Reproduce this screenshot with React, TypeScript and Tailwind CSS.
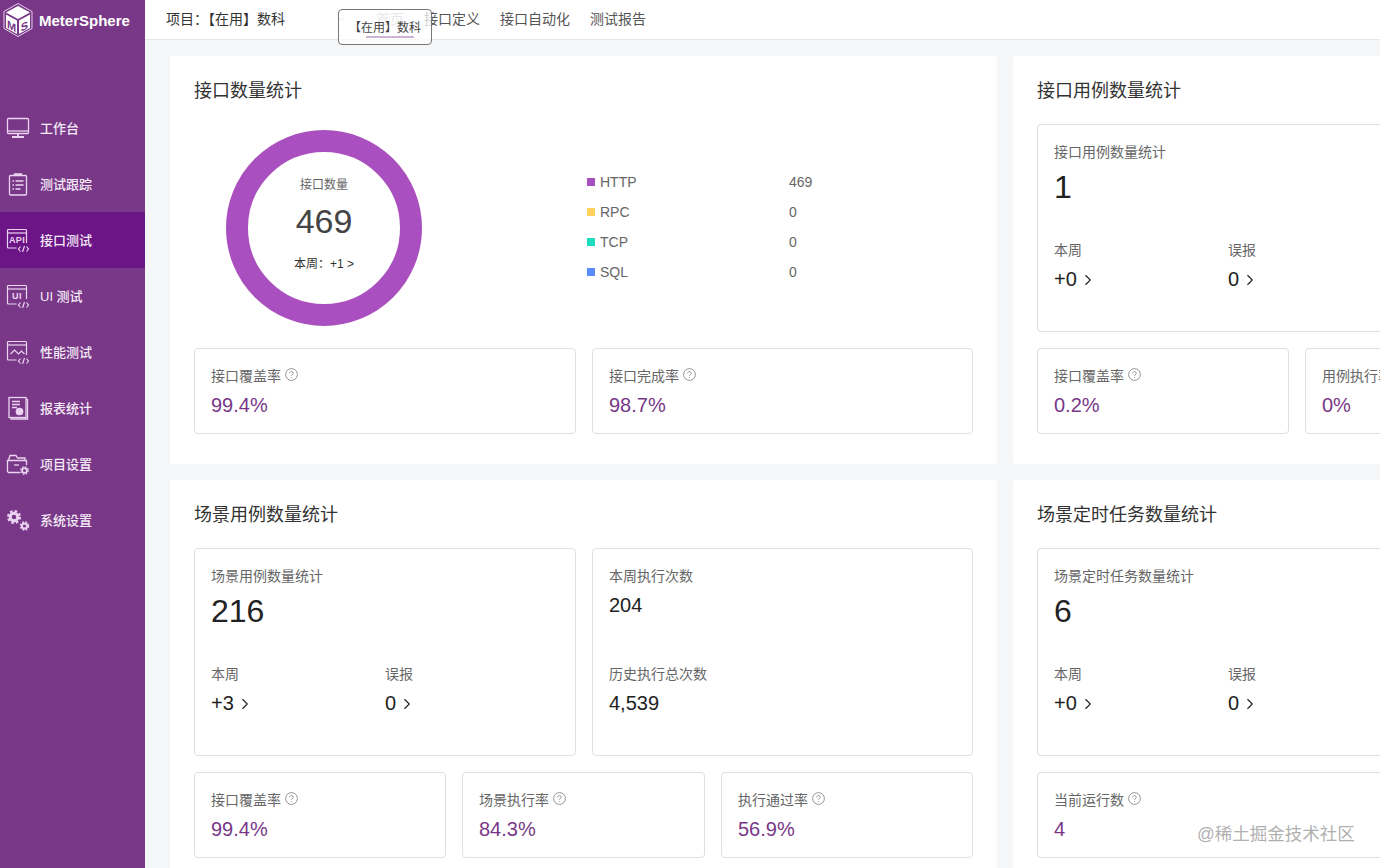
import React from 'react';
import { ChevronRight, ChevronDown } from 'lucide-react';

const IconStroke = '#ecd3f2';

const Monitor = () => (
  <svg width="24" height="22" viewBox="0 0 24 22" fill="none" stroke={IconStroke} strokeWidth="1.3">
    <rect x="1.5" y="1.5" width="21" height="15" rx="1" />
    <path d="M1.5 14h21" />
    <path d="M12 16.5v3M6 20h12" strokeWidth="1.8" />
  </svg>
);

const Clipboard = () => (
  <svg width="24" height="24" viewBox="0 0 24 24" fill="none" stroke={IconStroke} strokeWidth="1.3">
    <rect x="3.5" y="3.5" width="17" height="19.5" rx="1" />
    <path d="M8.5 4V2h7v2" fill={IconStroke} />
    <path d="M6.5 9h1.5M9.5 9h8M6.5 13h1.5M9.5 13h8M6.5 17h1.5M9.5 17h5" />
  </svg>
);

const CodeScreen = ({ label }: { label?: string }) => (
  <svg width="24" height="24" viewBox="0 0 24 24" fill="none" stroke={IconStroke} strokeWidth="1.2">
    <path d="M10.5 20H2.5a1 1 0 0 1-1-1V2.5a1 1 0 0 1 1-1h17a1 1 0 0 1 1 1V15" />
    <path d="M1.5 5h19" />
    {label ? (
      <text x="11" y="15" textAnchor="middle" fontSize="9" letterSpacing="0.4" fill={IconStroke} stroke="none" fontWeight="700" fontFamily="'Liberation Sans', sans-serif">
        {label}
      </text>
    ) : (
      <path d="M4.5 14l4-4 4 4 3-3 3 3" />
    )}
    <path d="M14.5 18.5L12.5 21l2 2.5M20.5 18.5l2 2.5-2 2.5M18.5 18l-2 6" />
  </svg>
);

const ReportIcon = () => (
  <svg width="22" height="24" viewBox="0 0 22 24" fill="none" stroke={IconStroke} strokeWidth="1.3">
    <rect x="2" y="1.5" width="17" height="20" />
    <path d="M19 3.5h1.5v19.5H4v-1.5" />
    <path d="M5 5.5h8M5 8.5h8M5 11.5h5" />
    <circle cx="12.5" cy="15.5" r="3.2" fill={IconStroke} />
  </svg>
);

const FolderGear = () => (
  <svg width="24" height="24" viewBox="0 0 24 24" fill="none" stroke={IconStroke} strokeWidth="1.3">
    <path d="M14 20.5H3a1.5 1.5 0 0 1-1.5-1.5V8.5h19V13" />
    <path d="M2.5 8.5l1.5-5h6l1.5 2.5h7.5v2.5" />
    <path d="M8 13h5" />
    <circle cx="18.5" cy="18.5" r="2.4" strokeWidth="1.8" />
    <circle cx="18.5" cy="18.5" r="3.8" strokeDasharray="1.6 1.4" strokeWidth="1.2" />
  </svg>
);

const Gears = () => (
  <svg width="24" height="24" viewBox="0 0 24 24" fill="none" stroke={IconStroke}>
    <circle cx="8" cy="9" r="3.8" strokeWidth="3" />
    <circle cx="8" cy="9" r="6" strokeWidth="2" strokeDasharray="2.6 2.1" />
    <circle cx="18.5" cy="18" r="2.6" strokeWidth="2" />
    <circle cx="18.5" cy="18" r="4" strokeWidth="1.5" strokeDasharray="1.8 1.4" />
  </svg>
);

const Logo = () => (
  <svg width="32" height="36" viewBox="0 0 32 36">
    <path d="M16 1.5L30 9.5v17L16 34.5 2 26.5v-17z" fill="none" stroke="#e6cdec" strokeWidth="1" />
    <path d="M16 4L28 10.5 16 17 4 10.5z" fill="#ffffff" />
    <path d="M4 12.5l11 6v13.5l-11-6z" fill="#ffffff" />
    <path d="M17 18.5l11-6v13.5l-11 6z" fill="#ffffff" />
    <text transform="translate(9.5 28) skewY(28)" textAnchor="middle" fontSize="11" fontWeight="700" fill="#783887" fontFamily="'Liberation Sans', sans-serif">M</text>
    <text transform="translate(22.5 28) skewY(-28)" textAnchor="middle" fontSize="11" fontWeight="700" fill="#783887" fontFamily="'Liberation Sans', sans-serif">S</text>
  </svg>
);

const navItems = [
  { name: '工作台', icon: <Monitor /> },
  { name: '测试跟踪', icon: <Clipboard /> },
  { name: '接口测试', icon: <CodeScreen label="API" />, active: true },
  { name: 'UI 测试', icon: <CodeScreen label="UI" /> },
  { name: '性能测试', icon: <CodeScreen /> },
  { name: '报表统计', icon: <ReportIcon /> },
  { name: '项目设置', icon: <FolderGear /> },
  { name: '系统设置', icon: <Gears /> },
];

const Sidebar = () => (
  <aside className="w-[145px] shrink-0 bg-[#783887] h-full">
    <div className="h-[100px] flex items-start pt-[2px] pl-[2px] gap-[5px]">
      <Logo />
      <span className="text-[15px] font-bold text-white leading-[38px] whitespace-nowrap">MeterSphere</span>
    </div>
    {navItems.map((item) => (
      <div key={item.name} className={`h-[56px] flex items-center pl-[6px] gap-[10px] text-[13px] font-medium text-[#f4e9f6] ${item.active ? 'bg-[#6c1587]' : ''}`}>
        <span className="w-[24px] h-[24px] flex items-center justify-center">{item.icon}</span>
        <span className="mt-[1px]">{item.name}</span>
      </div>
    ))}
  </aside>
);

const Header = () => (
  <header className="relative h-[40px] shrink-0 bg-white border-b border-[#e6e6e6] flex items-center pb-[1px] text-[14px] text-[#555]">
    <div className="w-[169px] ml-[21px] shrink-0 text-[#333] whitespace-nowrap">项目：<span>【在用】数科</span></div>
    <ChevronDown size={12} className="shrink-0 text-[#bbb]" />
    <div className="ml-[29px] flex gap-[20px] items-center">
      <span className="text-[#aaa]">首页</span>
      <span>接口定义</span>
      <span>接口自动化</span>
      <span>测试报告</span>
    </div>
    <div className="absolute left-[193px] top-[9px] w-[94px] h-[36px] bg-white/70 border border-[#777] rounded-[4px] flex justify-center pt-[9px] text-[12px] leading-[18px] text-[#444] z-10">
      【在用】数科
      <span className="absolute left-[27px] top-[26px] w-[48px] h-[2px] bg-[#cdb4d4]" />
    </div>
  </header>
);

const Help = () => (
  <svg width="13" height="13" viewBox="0 0 13 13" fill="none" stroke="#8a8a8a" strokeWidth="0.9" className="ml-[4px] -mt-[4px]">
    <circle cx="6.5" cy="6.5" r="5.9" />
    <path d="M4.8 5.2a1.7 1.7 0 1 1 2.6 1.4c-.6.4-.9.7-.9 1.3" />
    <path d="M6.5 9.2v.8" />
  </svg>
);

const RateBox = ({ label, value, className }: { label: string; value: string; className: string }) => (
  <div className={`h-[86px] shrink-0 bg-white border border-[#dcdfe6] rounded-[4px] pl-[16px] pt-[17px] ${className}`}>
    <div className="flex items-center text-[14px] leading-[20px] text-[#666] whitespace-nowrap">
      {label}
      <Help />
    </div>
    <div className="mt-[5px] text-[20px] leading-[28px] text-[#783887]">{value}</div>
  </div>
);

const Delta = ({ label, value, className }: { label: string; value: string; className: string }) => (
  <div className={className}>
    <div className="text-[14px] leading-[20px] text-[#666]">{label}</div>
    <div className="mt-[5px] flex items-center text-[20px] leading-[28px] text-[#222]">
      {value}
      <ChevronRight size={18} strokeWidth={1.5} className="ml-[2px] mt-[1px]" />
    </div>
  </div>
);

const CountBox = ({ title, value, week, bug, className }: { title: string; value: string; week: string; bug: string; className: string }) => (
  <div className={`h-[208px] shrink-0 bg-white border border-[#dcdfe6] rounded-[4px] pl-[16px] pt-[17px] ${className}`}>
    <div className="text-[14px] leading-[20px] text-[#666]">{title}</div>
    <div className="mt-[3px] text-[32px] leading-[44px] text-[#222]">{value}</div>
    <div className="mt-[31px] flex">
      <Delta label="本周" value={week} className="w-[174px]" />
      <Delta label="误报" value={bug} className="w-[150px]" />
    </div>
  </div>
);

const Card = ({ title, children }: { title: string; children: React.ReactNode }) => (
  <section className="w-[827px] shrink-0 h-[408px] bg-white rounded-[2px] px-[24px] pt-[21px]">
    <h2 className="text-[18px] leading-[28px] text-[#333] mb-[19px]">{title}</h2>
    {children}
  </section>
);

const legend = [
  { name: 'HTTP', value: '469', color: 'bg-[#aa4fbf]' },
  { name: 'RPC', value: '0', color: 'bg-[#ffd25e]' },
  { name: 'TCP', value: '0', color: 'bg-[#1fdcc0]' },
  { name: 'SQL', value: '0', color: 'bg-[#5a8cff]' },
];

const ApiCountCard = () => (
  <Card title="接口数量统计">
    <div className="h-[208px] flex">
      <div className="w-[393px] shrink-0 pl-[32px] pt-[6px]">
        <div className="w-[196px] h-[196px] rounded-full border-[22px] border-[#aa4fbf] flex flex-col items-center pt-[24px]">
          <div className="text-[12px] leading-[18px] text-[#666]">接口数量</div>
          <div className="mt-[3px] text-[34px] leading-[48px] text-[#444]">469</div>
          <div className="mt-[11px] text-[12px] leading-[16px] text-[#333] whitespace-nowrap">本周：+1 &gt;</div>
        </div>
      </div>
      <div className="pt-[43px] text-[14px] text-[#666]">
        {legend.map((row) => (
          <div key={row.name} className="h-[30px] flex items-center">
            <span className={`w-[8px] h-[8px] ${row.color}`} />
            <span className="ml-[5px] w-[189px]">{row.name}</span>
            <span>{row.value}</span>
          </div>
        ))}
      </div>
    </div>
    <div className="mt-[16px] flex gap-[16px]">
      <RateBox label="接口覆盖率" value="99.4%" className="w-[382px]" />
      <RateBox label="接口完成率" value="98.7%" className="w-[381px]" />
    </div>
  </Card>
);

const ApiCaseCard = () => (
  <Card title="接口用例数量统计">
    <CountBox title="接口用例数量统计" value="1" week="+0" bug="0" className="w-[779px]" />
    <div className="mt-[16px] flex gap-[16px]">
      <RateBox label="接口覆盖率" value="0.2%" className="w-[252px]" />
      <RateBox label="用例执行率" value="0%" className="w-[243px]" />
    </div>
  </Card>
);

const ScenarioCard = () => (
  <Card title="场景用例数量统计">
    <div className="flex gap-[16px]">
      <CountBox title="场景用例数量统计" value="216" week="+3" bug="0" className="w-[382px]" />
      <div className="w-[381px] h-[208px] bg-white border border-[#dcdfe6] rounded-[4px] pl-[16px] pt-[17px]">
        <div className="text-[14px] leading-[20px] text-[#666]">本周执行次数</div>
        <div className="mt-[5px] text-[20px] leading-[28px] text-[#222]">204</div>
        <div className="mt-[45px] text-[14px] leading-[20px] text-[#666]">历史执行总次数</div>
        <div className="mt-[5px] text-[20px] leading-[28px] text-[#222]">4,539</div>
      </div>
    </div>
    <div className="mt-[16px] flex gap-[16px]">
      <RateBox label="接口覆盖率" value="99.4%" className="w-[252px]" />
      <RateBox label="场景执行率" value="84.3%" className="w-[243px]" />
      <RateBox label="执行通过率" value="56.9%" className="w-[252px]" />
    </div>
  </Card>
);

const ScheduleCard = () => (
  <Card title="场景定时任务数量统计">
    <CountBox title="场景定时任务数量统计" value="6" week="+0" bug="0" className="w-[779px]" />
    <div className="mt-[16px] flex gap-[16px]">
      <RateBox label="当前运行数" value="4" className="w-[779px]" />
    </div>
  </Card>
);

export default function App() {
  return (
    <div className="relative w-[1380px] h-[868px] overflow-hidden flex font-['Liberation_Sans','Noto_Sans_CJK_SC',sans-serif]">
      <Sidebar />
      <main className="flex-1 min-w-0 h-full flex flex-col bg-[#f5f6f7]">
        <Header />
        <div className="pl-[25px] pt-[16px] flex flex-col gap-[16px]">
          <div className="flex gap-[16px]">
            <ApiCountCard />
            <ApiCaseCard />
          </div>
          <div className="flex gap-[16px]">
            <ScenarioCard />
            <ScheduleCard />
          </div>
        </div>
      </main>
      <span className="absolute left-[1197px] top-[822px] text-[17.5px] leading-[24px] text-[#9a9a9a]/80">@稀土掘金技术社区</span>
    </div>
  );
}
